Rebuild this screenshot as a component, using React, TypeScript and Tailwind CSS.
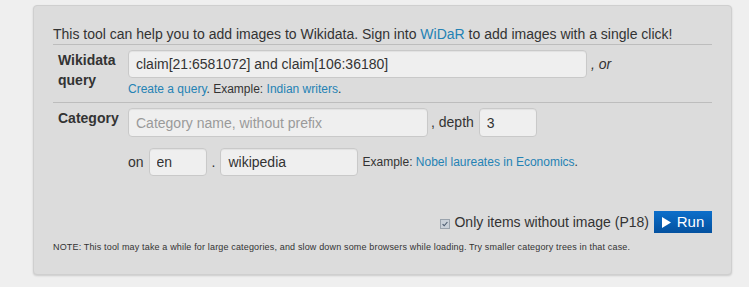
const link = 'text-[#2482b4]';
const input =
  'h-[28px] rounded-[4px] border border-[#c9c9c9] bg-[#efefef] px-[7px] text-[14px] text-[#333] placeholder:text-[#9a9a9a] outline-none shadow-[inset_0_1px_1px_rgba(0,0,0,0.06)]';

function Checkbox() {
  return (
    <span className="mr-[4px] mt-[3px] flex h-[10px] w-[10px] items-center justify-center border border-[#9aa3ad] bg-[#c9d0d8]">
      <svg viewBox="0 0 10 10" className="h-[8px] w-[8px]">
        <path d="M2 5.2 L4 7.2 L8 2.5" fill="none" stroke="#4a5a6e" strokeWidth="1.4" />
      </svg>
    </span>
  );
}

export default function App() {
  return (
    <div
      className="h-[287px] w-[749px] overflow-hidden bg-[#efefef] pl-[33px] pt-[5px] text-[#333]"
      style={{ fontFamily: '"Liberation Sans", Arial, sans-serif' }}
    >
      <div className="h-[270px] w-[699px] rounded-[4px] border border-[#cfcfcf] bg-[#dcdcdc] pl-[19px] pr-[19px] pt-[18px] shadow-[0_1px_2px_rgba(0,0,0,0.15)]">
        <p className="h-[20px] text-[14px] leading-[20px]">
          This tool can help you to add images to Wikidata. Sign into{' '}
          <a className={link}>WiDaR</a> to add images with a single click!
        </p>

        <div className="border-t border-[#bdbdbd] pt-[5px] pb-[5px] flex">
          <div className="w-[75px] pl-[5px] text-[14px] font-bold leading-[20px]">
            Wikidata
            <br />
            query
          </div>
          <div>
            <div className="flex items-center">
              <input
                className={`${input} w-[459px]`}
                defaultValue="claim[21:6581072] and claim[106:36180]"
              />
              <span className="ml-[4px] text-[14px] italic">, or</span>
            </div>
            <div className="mt-[3px] text-[12px] leading-[16px]">
              <a className={link}>Create a query</a>. Example:{' '}
              <a className={link}>Indian writers</a>.
            </div>
          </div>
        </div>

        <div className="border-t border-[#bdbdbd] pt-[5px] flex">
          <div className="w-[75px] pl-[5px] text-[14px] font-bold leading-[20px]">
            Category
          </div>
          <div>
            <div className="flex items-center">
              <input
                className={`${input} h-[29px] w-[300px]`}
                placeholder="Category name, without prefix"
              />
              <span className="ml-[3px] text-[14px]">, depth</span>
              <input className={`${input} ml-[5px] h-[29px] w-[58px]`} defaultValue="3" />
            </div>
            <div className="mt-[11px] flex items-center text-[14px]">
              <span>on</span>
              <input className={`${input} ml-[5px] w-[58px]`} defaultValue="en" />
              <span className="mx-[5px]">.</span>
              <input className={`${input} w-[138px]`} defaultValue="wikipedia" />
              <span className="ml-[4px] text-[12px]">
                Example: <a className={link}>Nobel laureates in Economics</a>.
              </span>
            </div>
          </div>
        </div>

        <div className="mt-[35px] flex items-center justify-end">
          <Checkbox />
          <span className="text-[14px]">Only items without image (P18)</span>
          <button className="ml-[5px] flex h-[22px] w-[58px] items-center justify-center gap-[6px] bg-gradient-to-b from-[#0c6fcb] to-[#04519f] text-[15px] text-white">
            <svg viewBox="0 0 10 12" className="h-[11px] w-[9px]">
              <path d="M0 0 L10 6 L0 12 Z" fill="white" />
            </svg>
            Run
          </button>
        </div>

        <p className="mt-[8px] text-[9px] leading-[12px] tracking-[0.16px]">
          NOTE: This tool may take a while for large categories, and slow down some browsers
          while loading. Try smaller category trees in that case.
        </p>
      </div>
    </div>
  );
}
